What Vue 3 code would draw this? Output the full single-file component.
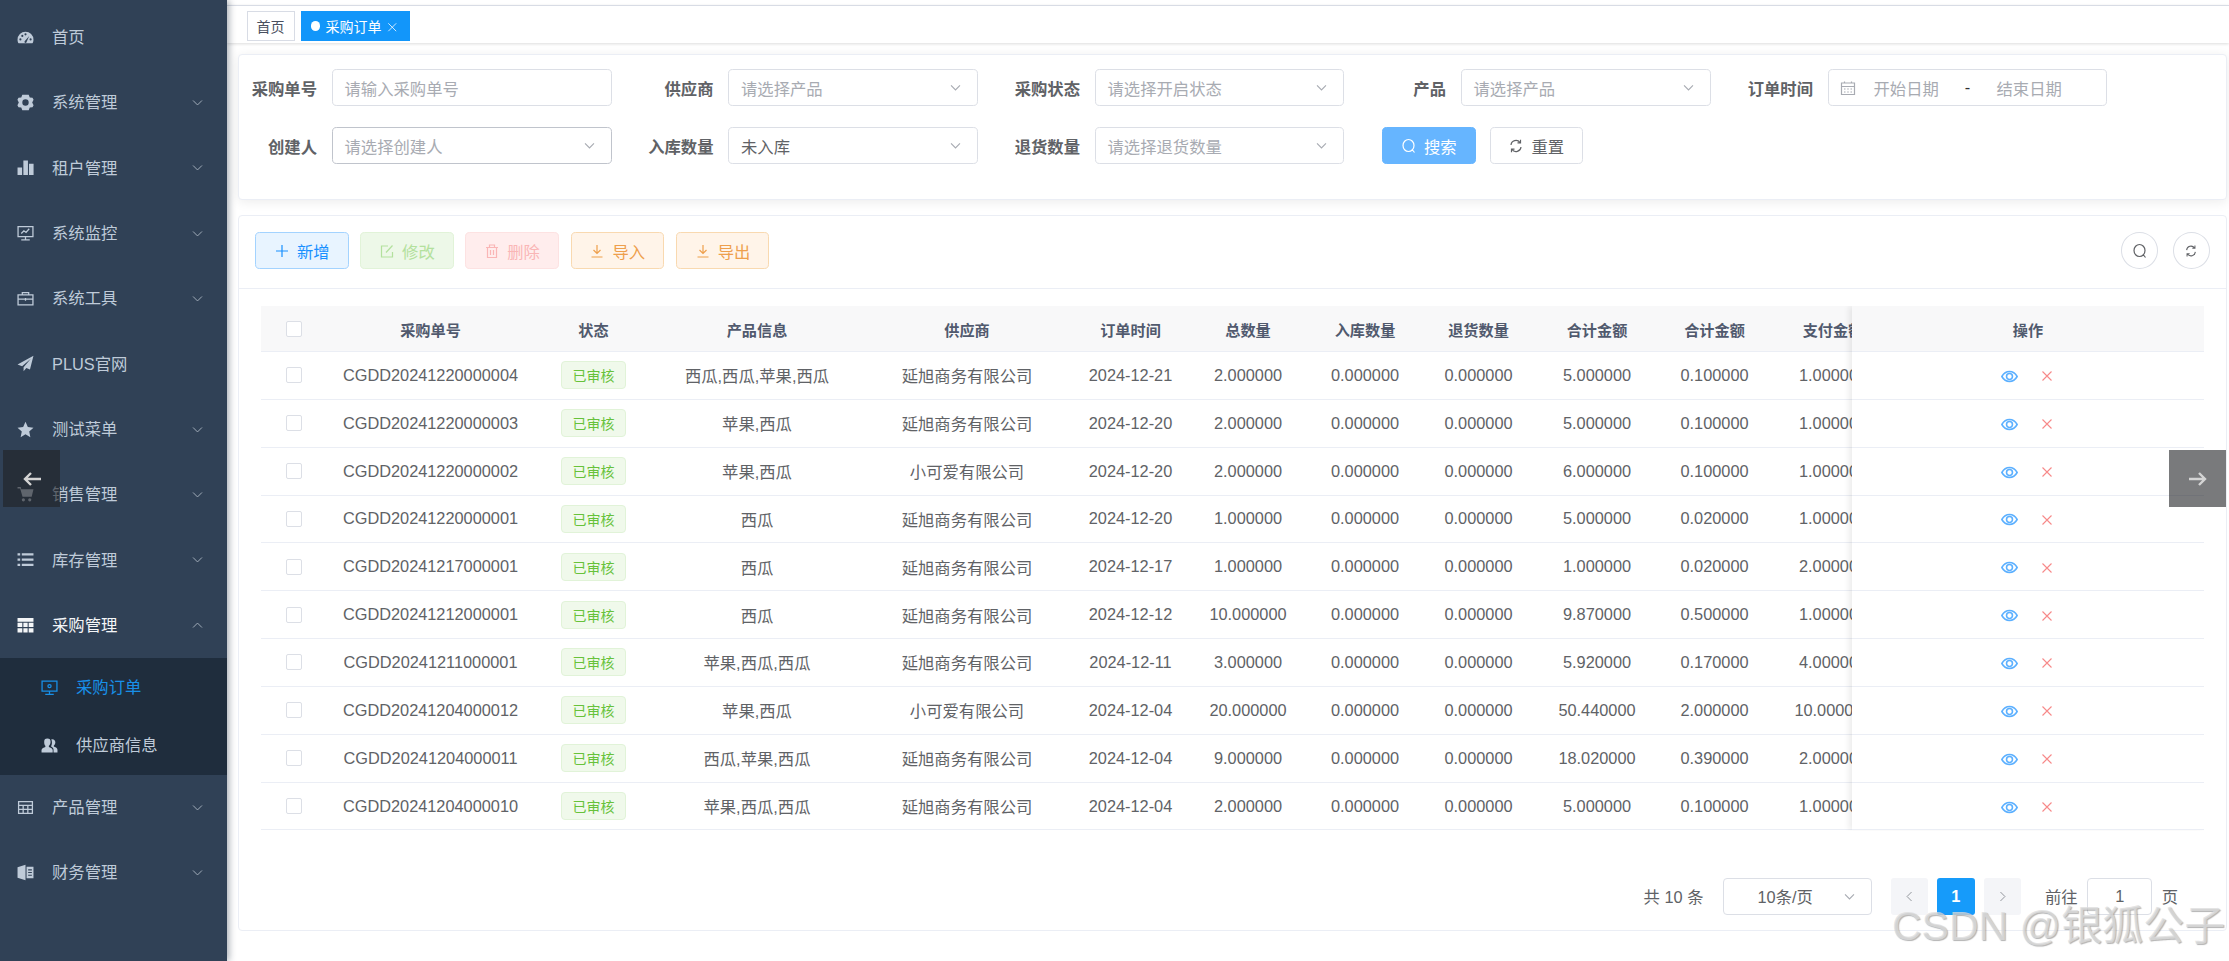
<script setup>
const icons = {
  dash: { f: 1, d: 'M8 2.500A7.500 7.500 0 0 0 .5 10c0 1.400.4 2.700 1 3.500h13c.6-.8 1-2.100 1-3.500A7.500 7.500 0 0 0 8 2.500zM2.200 9.800a1 1 0 1 0 2 0a1 1 0 1 0-2 0zM4 6.500a1 1 0 1 0 2 0a1 1 0 1 0-2 0zM7 5a1 1 0 1 0 2 0a1 1 0 1 0-2 0zM11.800 9.800a1 1 0 1 0 2 0a1 1 0 1 0-2 0zM7.200 11.500a1 1 0 1 0 1.800.8L11.500 6.500z' },
  gear: { f: 1, d: 'M5 .8h6l1 2.400 2.600.3 1 1.800-1.300 2.700 1.300 2.700-1 1.800-2.600.3-1 2.400H5l-1-2.400-2.600-.3-1-1.800L1.700 8 .4 5.300l1-1.800L4 3.200zM5 8a3 3 0 1 0 6 0a3 3 0 1 0-6 0z' },
  bars: { f: 1, d: 'M.5 8h4.300v7H.5zM6 1.500h4.300V15H6zM11.300 4.500h4.300V15h-4.300z' },
  monitor: { f: 0, d: 'M1 1.500h14v9.500H1zM8 11v2.500M4 14h8M4 8l2.500-2.500 2 1.500 3-3.500' },
  tool: { f: 0, d: 'M1 4.500h14v9.500H1zM5 4.500V2.500h6v2M1 8.500h14M8 7.500v2.500' },
  plane: { f: 1, d: 'M15.500.8.5 9l4.300 1.600L13 3.500 6.200 11.500v3.700l2.600-3 3.400 1.400z' },
  star: { f: 1, d: 'M8 .8l2.200 4.900 5.300.6-4 3.600 1.100 5.300L8 12.500l-4.600 2.700 1.100-5.300-4-3.600 5.300-.6z' },
  cart: { f: 1, d: 'M.5 1h3l.5 2h11.500l-1.700 7H5.200L3 2.400H.5zM4.500 13a1.500 1.500 0 1 0 3 0a1.500 1.500 0 1 0-3 0zM10.500 13a1.500 1.500 0 1 0 3 0a1.500 1.500 0 1 0-3 0z' },
  list: { f: 1, d: 'M.5 2h2.500v2.200H.5zM4.500 2h11v2.200h-11zM.5 7h2.500v2.200H.5zM4.500 7h11v2.200h-11zM.5 12h2.500v2.200H.5zM4.500 12h11v2.200h-11z' },
  table: { f: 1, d: 'M.5 1h15v3.500H.5zM.5 5.500h4.500v4H.5zM6 5.500h4v4H6zM11 5.500h4.500v4H11zM.5 10.500h4.500v4H.5zM6 10.500h4v4H6zM11 10.500h4.500v4H11z' },
  grid: { f: 0, d: 'M1.500 2.500h13v11h-13zM1.500 6h13M1.500 9.700h13M5.800 6v7.500M10.200 6v7.500' },
  book: { f: 1, d: 'M.5 3 8 .8v14.400L.5 13zM9 2.500h6.500v11H9zM10.500 5v1h3.500V5zM10.500 7.500v1h3.500v-1zM10.500 10v1h3.500v-1z' },
  screen: { f: 0, d: 'M1 2h14v9.500H1zM8 11.500V14M4 14.500h8M6.500 6.700a1.500 1.500 0 1 0 3 0a1.500 1.500 0 1 0-3 0z' },
  users: { f: 1, d: 'M6 1.500a3 3 0 0 1 3 3.200c0 1.500-.8 3-1.600 3.500v1.100c1.200.5 3.600 1.300 3.600 3v2.200H.5v-2.200c0-1.700 2.400-2.500 3.600-3V8.200C3.300 7.700 3 6.200 3 4.700a3 3 0 0 1 3-3.200zM10.600 2c1.800 0 2.900 1.300 2.900 3 0 1.300-.6 2.600-1.400 3.100V9c1.100.5 3.400 1.100 3.400 3v2.500h-3.700V12c0-1.400-1.100-2.400-2.500-3.200.6-.9 1-2.300 1-3.500 0-1.300-.2-2.300-.8-3z' },
  search: { f: 0, d: 'M2 7.500a5.500 6 0 1 0 11 0a5.500 6 0 1 0-11 0zM11.500 12l2 2.500' },
  refresh: { f: 0, d: 'M3 7a5 5 0 0 1 9-2.500M13 9a5 5 0 0 1-9 2.500M12.500 1.800v3h-3M3.500 14.200v-3h3' },
  plus: { f: 0, d: 'M8 2v12M2 8h12' },
  edit: { f: 0, d: 'M13.500 9v5h-11V3h6.500M7 9.500 13.500 2.500' },
  trash: { f: 0, d: 'M3.500 4.500v10h9v-10M2 4.500h12M5.500 4.500V2h5v2.500M6.500 7v5M9.500 7v5' },
  down: { f: 0, d: 'M8 2v8M4.500 7 8 10.500 11.500 7M2.500 14h11' },
  cal: { f: 0, d: 'M1.500 3h13v11.500h-13zM1.500 6.500h13M4 9h1.500M7.250 9h1.500M10.500 9H12M4 12h1.500M7.250 12h1.500M10.500 12H12M4.500 1.500V3M11.500 1.500V3' },
  eye: { f: 0, d: 'M.8 8C2.500 5 5 3.300 8 3.300S13.500 5 15.200 8C13.500 11 11 12.700 8 12.700S2.500 11 .8 8zM5.200 8a2.800 2.800 0 1 0 5.600 0a2.800 2.800 0 1 0-5.600 0z' },
  cross: { f: 0, d: 'M2 2l12 12M14 2 2 14' },
  chevD: { f: 0, d: 'M2.500 5.500 8 11l5.500-5.500' },
  chevU: { f: 0, d: 'M2.500 10.500 8 5l5.500 5.500' },
  chevL: { f: 0, d: 'M10.500 2.500 5 8l5.500 5.500' },
  chevR: { f: 0, d: 'M5.500 2.500 11 8l-5.500 5.500' }
}

const menuTop = [
  { t: '首页', i: 'dash' },
  { t: '系统管理', i: 'gear', c: 1 },
  { t: '租户管理', i: 'bars', c: 1 },
  { t: '系统监控', i: 'monitor', c: 1 },
  { t: '系统工具', i: 'tool', c: 1 },
  { t: 'PLUS官网', i: 'plane' },
  { t: '测试菜单', i: 'star', c: 1 },
  { t: '销售管理', i: 'cart', c: 1 },
  { t: '库存管理', i: 'list', c: 1 }
]
const menuBottom = [
  { t: '产品管理', i: 'grid', c: 1 },
  { t: '财务管理', i: 'book', c: 1 }
]

const tools = [
  { t: '新增', i: 'plus', k: 'blue' },
  { t: '修改', i: 'edit', k: 'green' },
  { t: '删除', i: 'trash', k: 'red' },
  { t: '导入', i: 'down', k: 'orange' },
  { t: '导出', i: 'down', k: 'orange' }
]

const heads = ['采购单号', '状态', '产品信息', '供应商', '订单时间', '总数量', '入库数量', '退货数量', '合计金额', '合计金额', '支付金额']
const A = '延旭商务有限公司'
const B = '小可爱有限公司'
const rows = [
  ['CGDD20241220000004', '西瓜,西瓜,苹果,西瓜', A, '2024-12-21', '2.000000', '5.000000', '0.100000', '1.000000'],
  ['CGDD20241220000003', '苹果,西瓜', A, '2024-12-20', '2.000000', '5.000000', '0.100000', '1.000000'],
  ['CGDD20241220000002', '苹果,西瓜', B, '2024-12-20', '2.000000', '6.000000', '0.100000', '1.000000'],
  ['CGDD20241220000001', '西瓜', A, '2024-12-20', '1.000000', '5.000000', '0.020000', '1.000000'],
  ['CGDD20241217000001', '西瓜', A, '2024-12-17', '1.000000', '1.000000', '0.020000', '2.000000'],
  ['CGDD20241212000001', '西瓜', A, '2024-12-12', '10.000000', '9.870000', '0.500000', '1.000000'],
  ['CGDD20241211000001', '苹果,西瓜,西瓜', A, '2024-12-11', '3.000000', '5.920000', '0.170000', '4.000000'],
  ['CGDD20241204000012', '苹果,西瓜', B, '2024-12-04', '20.000000', '50.440000', '2.000000', '10.000000'],
  ['CGDD20241204000011', '西瓜,苹果,西瓜', A, '2024-12-04', '9.000000', '18.020000', '0.390000', '2.000000'],
  ['CGDD20241204000010', '苹果,西瓜,西瓜', A, '2024-12-04', '2.000000', '5.000000', '0.100000', '1.000000']
]
</script>

<template>
  <div class="app">
    <aside class="side">
      <div v-for="m in menuTop" :key="m.t" class="mi">
        <svg class="mic" viewBox="0 0 16 16"><path :class="icons[m.i].f ? 'fl' : 'ln'" :d="icons[m.i].d" /></svg>
        <span class="mt">{{ m.t }}</span>
        <svg v-if="m.c" class="chev" viewBox="0 0 16 16"><path class="ln" :d="icons.chevD.d" /></svg>
      </div>
      <div class="mi open">
        <svg class="mic" viewBox="0 0 16 16"><path class="fl" :d="icons.table.d" /></svg>
        <span class="mt">采购管理</span>
        <svg class="chev" viewBox="0 0 16 16"><path class="ln" :d="icons.chevU.d" /></svg>
      </div>
      <div class="sub">
        <div class="si active">
          <svg class="mic" viewBox="0 0 16 16"><path class="ln" :d="icons.screen.d" /></svg>
          <span class="mt">采购订单</span>
        </div>
        <div class="si">
          <svg class="mic" viewBox="0 0 16 16"><path class="fl" :d="icons.users.d" /></svg>
          <span class="mt">供应商信息</span>
        </div>
      </div>
      <div v-for="m in menuBottom" :key="m.t" class="mi">
        <svg class="mic" viewBox="0 0 16 16"><path :class="icons[m.i].f ? 'fl' : 'ln'" :d="icons[m.i].d" /></svg>
        <span class="mt">{{ m.t }}</span>
        <svg class="chev" viewBox="0 0 16 16"><path class="ln" :d="icons.chevD.d" /></svg>
      </div>
    </aside>

    <main class="main">
      <div class="topline"></div>
      <div class="tags">
        <span class="tag">首页</span>
        <span class="tag on">
          <i class="dot"></i>采购订单
          <svg class="tagx" viewBox="0 0 16 16"><path class="ln" :d="icons.cross.d" /></svg>
        </span>
      </div>

      <div class="content">
        <section class="card search">
          <div class="form">
            <div class="fi"><label>采购单号</label><div class="ctl ph">请输入采购单号</div></div>
            <div class="fi"><label>供应商</label><div class="ctl ph">请选择产品<svg class="cv" viewBox="0 0 16 16"><path class="ln" :d="icons.chevD.d" /></svg></div></div>
            <div class="fi"><label>采购状态</label><div class="ctl ph">请选择开启状态<svg class="cv" viewBox="0 0 16 16"><path class="ln" :d="icons.chevD.d" /></svg></div></div>
            <div class="fi"><label>产品</label><div class="ctl ph">请选择产品<svg class="cv" viewBox="0 0 16 16"><path class="ln" :d="icons.chevD.d" /></svg></div></div>
            <div class="fi"><label>订单时间</label>
              <div class="ctl date">
                <svg class="calic" viewBox="0 0 16 16"><path class="ln" :d="icons.cal.d" /></svg>
                <span class="dv">开始日期</span><span class="dash">-</span><span class="dv">结束日期</span>
              </div>
            </div>
            <div class="fi"><label>创建人</label><div class="ctl ph hover">请选择创建人<svg class="cv" viewBox="0 0 16 16"><path class="ln" :d="icons.chevD.d" /></svg></div></div>
            <div class="fi"><label>入库数量</label><div class="ctl val">未入库<svg class="cv" viewBox="0 0 16 16"><path class="ln" :d="icons.chevD.d" /></svg></div></div>
            <div class="fi"><label>退货数量</label><div class="ctl ph">请选择退货数量<svg class="cv" viewBox="0 0 16 16"><path class="ln" :d="icons.chevD.d" /></svg></div></div>
            <div class="acts">
              <button class="btn primary"><svg class="bic" viewBox="0 0 16 16"><path class="ln" :d="icons.search.d" /></svg>搜索</button>
              <button class="btn plain"><svg class="bic" viewBox="0 0 16 16"><path class="ln" :d="icons.refresh.d" /></svg>重置</button>
            </div>
          </div>
        </section>

        <section class="card list">
          <div class="toolbar">
            <button v-for="b in tools" :key="b.t" class="btn" :class="b.k">
              <svg class="bic" viewBox="0 0 16 16"><path class="ln" :d="icons[b.i].d" /></svg>{{ b.t }}
            </button>
            <div class="spacer"></div>
            <button class="circle"><svg class="bic0" viewBox="0 0 16 16"><path class="ln" :d="icons.search.d" /></svg></button>
            <button class="circle"><svg class="bic0 small" viewBox="0 0 16 16"><path class="ln" :d="icons.refresh.d" /></svg></button>
          </div>

          <div class="table">
            <div class="tleft">
              <div class="tr thead">
                <div class="td"><i class="cb"></i></div>
                <div v-for="(h, n) in heads" :key="n" class="td">{{ h }}</div>
              </div>
              <div v-for="r in rows" :key="r[0]" class="tr">
                <div class="td"><i class="cb"></i></div>
                <div class="td">{{ r[0] }}</div>
                <div class="td"><span class="status">已审核</span></div>
                <div class="td">{{ r[1] }}</div>
                <div class="td">{{ r[2] }}</div>
                <div class="td">{{ r[3] }}</div>
                <div class="td">{{ r[4] }}</div>
                <div class="td">0.000000</div>
                <div class="td">0.000000</div>
                <div class="td">{{ r[5] }}</div>
                <div class="td">{{ r[6] }}</div>
                <div class="td">{{ r[7] }}</div>
              </div>
            </div>
            <div class="tright">
              <div class="oph">操作</div>
              <div v-for="r in rows" :key="r[0]" class="opr">
                <svg class="eye" viewBox="0 0 16 16"><path class="ln" :d="icons.eye.d" /></svg>
                <svg class="del" viewBox="0 0 16 16"><path class="ln" :d="icons.cross.d" /></svg>
              </div>
            </div>
          </div>

          <div class="pager">
            <span>共 10 条</span>
            <div class="psize">10条/页<svg class="cv" viewBox="0 0 16 16"><path class="ln" :d="icons.chevD.d" /></svg></div>
            <div class="pnums">
              <span class="pn"><svg class="pc" viewBox="0 0 16 16"><path class="ln" :d="icons.chevL.d" /></svg></span>
              <span class="pn cur">1</span>
              <span class="pn"><svg class="pc" viewBox="0 0 16 16"><path class="ln" :d="icons.chevR.d" /></svg></span>
            </div>
            <div class="jump"><span>前往</span><span class="jinput">1</span><span>页</span></div>
          </div>
        </section>
      </div>
    </main>

    <div class="nav left">
      <svg viewBox="0 0 24 24"><path d="M21 12H5M11 6l-6 6 6 6" /></svg>
    </div>
    <div class="nav right">
      <svg viewBox="0 0 24 24"><path d="M3 12h16M13 6l6 6-6 6" /></svg>
    </div>
    <div class="mark">CSDN @银狐公子</div>
  </div>
</template>

<style>
html, body { margin: 0; background: #fff; }
</style>

<style scoped>
.app {
  position: relative;
  display: flex;
  width: 2229px;
  height: 961px;
  overflow: hidden;
  background: #fff;
  font-family: "Liberation Sans", "Noto Sans CJK SC", sans-serif;
  font-size: 16.33px;
  color: #606266;
}
.fl { fill: currentColor; fill-rule: evenodd; stroke: none; }
.ln { fill: none; stroke: currentColor; stroke-width: 1.2; }

/* sidebar */
.side {
  position: relative;
  z-index: 2;
  flex: none;
  width: 227px;
  padding-top: 4.6px;
  box-sizing: border-box;
  background: #304156;
  color: #bfcbd9;
  box-shadow: 2px 0 7px rgba(0, 21, 41, .35);
}
.mi, .si { display: flex; align-items: center; box-sizing: border-box; }
.mi { height: 65.33px; padding-left: 17px; }
.si { height: 58.33px; padding-left: 41px; }
.mic { width: 17px; height: 17px; flex: none; }
.mt { margin-left: 18px; line-height: 1; }
.chev { width: 13px; height: 13px; margin-left: auto; margin-right: 23px; color: #a4afbb; }
.open { color: #f4f6f8; }
.sub { background: #1f2d3d; }
.si.active { color: #1890e8; }

/* main */
.main { flex: 1; min-width: 0; }
.topline { height: 5px; background: #fff; box-shadow: 0 1px 4px rgba(0, 21, 41, .08); }
.tags {
  position: relative;
  display: flex;
  gap: 6px;
  height: 38px;
  box-sizing: border-box;
  padding: 5px 0 0 19.5px;
  border-top: 1px solid #d8dce5;
  background: #fff;
  box-shadow: 0 1px 3px rgba(0, 0, 0, .14);
}
.tag {
  display: flex;
  align-items: center;
  height: 30px;
  box-sizing: border-box;
  padding: 0 9px;
  border: 1px solid #d8dce5;
  font-size: 14px;
  color: #495060;
  background: #fff;
}
.tag.on { background: #1296fa; border-color: #1296fa; color: #fff; padding: 0 12px 0 9px; }
.dot { width: 9.5px; height: 9.5px; margin-right: 5.5px; border-radius: 50%; background: #fff; }
.tagx { width: 10.5px; height: 10.5px; margin-left: 5px; margin-top: 3px; }

.content { padding: 11px 2px 0 11px; }
.card {
  box-sizing: border-box;
  border: 1px solid #ebeef5;
  border-radius: 4px;
  background: #fff;
}
.search { height: 146px; padding-top: 14px; box-shadow: 0 2px 12px rgba(0, 0, 0, .08); }
.form {
  display: grid;
  grid-template-columns: 372.5px 342.5px 342px 343px 372px;
  column-gap: 24px;
  row-gap: 21px;
}
.fi { display: flex; align-items: center; height: 37px; }
.fi label {
  flex: none;
  width: 78px;
  margin-right: 14.5px;
  text-align: right;
  font-weight: 700;
  color: #606266;
}
.ctl {
  flex: 1;
  display: flex;
  align-items: center;
  height: 37px;
  box-sizing: border-box;
  padding: 0 15px 0 12px;
  border: 1px solid #dcdfe6;
  border-radius: 4.6px;
  background: #fff;
}
.ph { color: #a8abb2; }
.val { color: #606266; }
.hover { border-color: #c0c4cc; }
.cv { width: 13px; height: 13px; margin-left: auto; color: #a8abb2; flex: none; }
.cv .ln { stroke-width: 1.4; }
.date { padding: 0 24px 0 11px; color: #a8abb2; }
.calic { width: 16px; height: 16px; flex: none; margin-right: 18px; color: #a8abb2; }
.dv { width: 65px; text-align: center; white-space: nowrap; }
.dash { width: 58px; text-align: center; color: #303133; }
.acts { display: flex; gap: 14px; padding-left: 14px; }

.btn {
  display: flex;
  align-items: center;
  justify-content: center;
  width: 93.5px;
  height: 37px;
  padding: 0;
  box-sizing: border-box;
  border: 1px solid #dcdfe6;
  border-radius: 4.6px;
  font: inherit;
  background: #fff;
  color: #606266;
}
.bic { width: 16px; height: 16px; margin-right: 7px; flex: none; }
.primary { background: #66b5ff; border-color: #66b5ff; color: #fff; }
.blue { background: #e8f4ff; border-color: #a3d3ff; color: #1890ff; }
.green { background: #edf8e8; border-color: #e1f3d8; color: #b3e19d; }
.red { background: #ffeded; border-color: #fde2e2; color: #fab6b6; }
.orange { background: #fff4e9; border-color: #f9d9b0; color: #ee9f4c; }

/* list card */
.list { height: 716px; margin-top: 15px; }
.toolbar {
  display: flex;
  gap: 11.7px;
  height: 73px;
  box-sizing: border-box;
  padding: 16px 16px 0;
  align-items: flex-start;
  border-bottom: 1px solid #ebeef5;
}
.spacer { flex: 1; }
.circle {
  display: flex;
  align-items: center;
  justify-content: center;
  width: 37.5px;
  height: 37px;
  padding: 0;
  margin-left: 2.4px;
  border: 1px solid #dcdfe6;
  border-radius: 50%;
  background: #fff;
  color: #606266;
}
.bic0 { width: 16px; height: 16px; }
.bic0.small { width: 14px; height: 14px; }

.table { display: flex; margin: 17px 22px 0; }
.tleft { flex: 1; min-width: 0; overflow: hidden; }
.tr {
  display: grid;
  grid-template-columns: 66px 207px 119px 208px 212px 115px 120px 114px 113px 124px 111px 126px;
  width: 1635px;
  height: 47.85px;
  box-sizing: border-box;
  border-bottom: 1px solid #ebeef5;
}
.td { display: flex; align-items: center; justify-content: center; white-space: nowrap; overflow: hidden; }
.thead { height: 46px; background: #f8f8f9; color: #515a6e; font-weight: 700; font-size: 15.17px; }
.cb {
  width: 16px;
  height: 16px;
  box-sizing: border-box;
  border: 1px solid #dcdfe6;
  border-radius: 2px;
  background: #fff;
}
.status {
  display: flex;
  align-items: center;
  justify-content: center;
  width: 65px;
  height: 28px;
  box-sizing: border-box;
  border: 1px solid #e1f3d8;
  border-radius: 4px;
  background: #f0f9eb;
  color: #67c23a;
  font-size: 14px;
}
.tright {
  position: relative;
  flex: none;
  width: 352px;
  background: #fff;
  box-shadow: -3px 0 6px rgba(0, 0, 0, .08);
  clip-path: inset(0 0 0 -12px);
}
.oph {
  display: flex;
  align-items: center;
  justify-content: center;
  height: 46px;
  box-sizing: border-box;
  border-bottom: 1px solid #ebeef5;
  background: #f8f8f9;
  color: #515a6e;
  font-weight: 700;
  font-size: 15.17px;
}
.opr {
  display: flex;
  align-items: center;
  justify-content: center;
  gap: 22.7px;
  height: 47.85px;
  box-sizing: border-box;
  border-bottom: 1px solid #ebeef5;
  padding: 2px 2px 0 0;
}
.eye { width: 17px; height: 17px; color: #5cb0ff; }
.eye .ln { stroke-width: 1.5; }
.del { width: 12px; height: 12px; color: #f78989; }
.del .ln { stroke-width: 1.5; }

/* pager */
.pager {
  display: flex;
  align-items: center;
  justify-content: flex-end;
  height: 37px;
  margin-top: 47.5px;
  padding-right: 48px;
  gap: 19px;
}
.psize {
  display: flex;
  align-items: center;
  width: 149px;
  height: 37px;
  box-sizing: border-box;
  padding: 0 15px 0 34px;
  border: 1px solid #dcdfe6;
  border-radius: 4px;
}
.pnums { display: flex; gap: 9px; }
.pn {
  display: flex;
  align-items: center;
  justify-content: center;
  width: 37.5px;
  height: 37px;
  background: #f4f5f8;
  border-radius: 3px;
  color: #909399;
}
.pc { width: 13px; height: 13px; }
.pn.cur { background: #169bfa; color: #fff; font-weight: 700; }
.jump { display: flex; align-items: center; gap: 9.5px; margin-left: 5px; }
.jinput {
  display: flex;
  align-items: center;
  justify-content: center;
  width: 65px;
  height: 37px;
  box-sizing: border-box;
  border: 1px solid #dcdfe6;
  border-radius: 4px;
}

/* overlays */
.nav {
  position: absolute;
  z-index: 5;
  top: 450px;
  width: 57px;
  height: 57px;
  display: flex;
  align-items: center;
  justify-content: center;
  background: rgba(32, 33, 36, .6);
}
.nav.left { left: 3px; }
.nav.right { left: 2169px; }
.nav svg { width: 24px; height: 24px; fill: none; stroke: #d4d4d4; stroke-width: 2.4; }
.mark {
  position: absolute;
  z-index: 6;
  left: 1892px;
  top: 902px;
  font-size: 41px;
  line-height: 48px;
  white-space: nowrap;
  color: rgba(222, 222, 222, .75);
  text-shadow: 1px 1px 1px rgba(0, 0, 0, .3);
}
</style>
